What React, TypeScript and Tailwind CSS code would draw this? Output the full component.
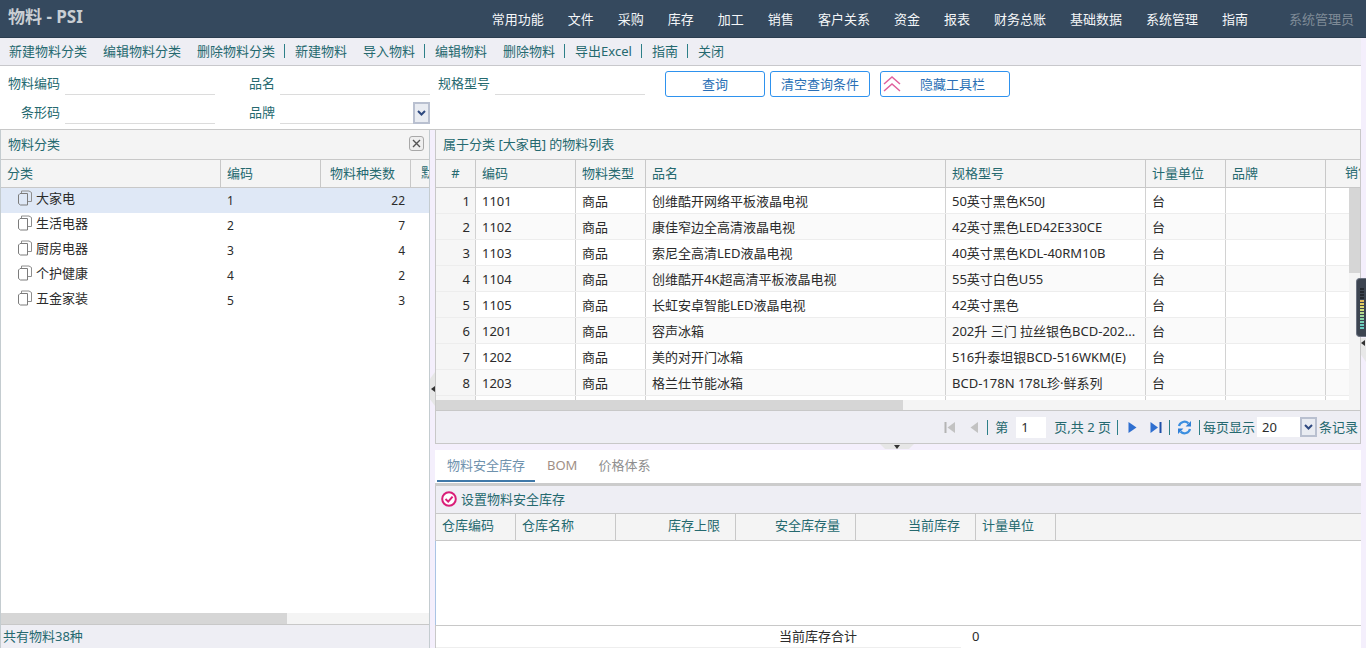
import React from "react"

const menus = ["常用功能", "文件", "采购", "库存", "加工", "销售", "客户关系", "资金", "报表", "财务总账", "基础数据", "系统管理", "指南"]

const tools = [
  "新建物料分类", "编辑物料分类", "删除物料分类", "|", "新建物料", "导入物料", "|",
  "编辑物料", "删除物料", "|", "导出Excel", "|", "指南", "|", "关闭",
]

const categories = [
  { name: "大家电", code: "1", count: "22" },
  { name: "生活电器", code: "2", count: "7" },
  { name: "厨房电器", code: "3", count: "4" },
  { name: "个护健康", code: "4", count: "2" },
  { name: "五金家装", code: "5", count: "3" },
]

const goods = [
  ["1", "1101", "商品", "创维酷开网络平板液晶电视", "50英寸黑色K50J", "台"],
  ["2", "1102", "商品", "康佳窄边全高清液晶电视", "42英寸黑色LED42E330CE", "台"],
  ["3", "1103", "商品", "索尼全高清LED液晶电视", "40英寸黑色KDL-40RM10B", "台"],
  ["4", "1104", "商品", "创维酷开4K超高清平板液晶电视", "55英寸白色U55", "台"],
  ["5", "1105", "商品", "长虹安卓智能LED液晶电视", "42英寸黑色", "台"],
  ["6", "1201", "商品", "容声冰箱", "202升 三门 拉丝银色BCD-202...", "台"],
  ["7", "1202", "商品", "美的对开门冰箱", "516升泰坦银BCD-516WKM(E)", "台"],
  ["8", "1203", "商品", "格兰仕节能冰箱", "BCD-178N 178L珍·鲜系列", "台"],
  ["", "", "", "", "", ""],
]

const handleBars = ["#23282f", "#23282f", "#23282f", "#23282f", "#e0b85a", "#e3cc62", "#dcd76e", "#cfdc7c", "#b5d98e", "#9fd69c", "#8ad3a8", "#78d0b4", "#6accc0", "#6accc0"]

function HeadCell({ className, children }: { className: string; children?: React.ReactNode }) {
  return (
    <div className={`flex h-full shrink-0 items-center overflow-hidden whitespace-nowrap border-r border-[#c8c8c8] ${className}`}>
      {children}
    </div>
  )
}

function Field({ label, children }: { label: string; children?: React.ReactNode }) {
  return (
    <div className="flex w-[215px] shrink-0 items-center">
      <span className="w-[60px] text-right">{label}</span>
      <div className="ml-[5px] flex h-[24px] w-[150px] justify-end border-b border-[#dcdcdc]">{children}</div>
    </div>
  )
}

function DropArrow({ className }: { className: string }) {
  return (
    <div className={`flex items-center justify-center border-2 border-[#b9c0d0] bg-[#e9ecf2] ${className}`}>
      <svg width="9" height="6" viewBox="0 0 9 6">
        <path d="M1 1 L4.5 4.5 L8 1" fill="none" stroke="#2f4a80" strokeWidth="2" />
      </svg>
    </div>
  )
}

function PageIcon() {
  return (
    <svg width="15" height="16" viewBox="0 0 15 16" className="shrink-0">
      <path d="M3.5 3.5 V1 H11 L13.5 2.5 V11.5 H9.5" fill="none" stroke="#8e8e8e" />
      <path d="M0.5 5 L2 3.5 H9.5 V15 H2.5 L0.5 13.5 Z" fill="none" stroke="#7c7c7c" />
    </svg>
  )
}

function Sep({ className }: { className: string }) {
  return <span className={`block h-[15px] w-px shrink-0 bg-[#2c7f88] ${className}`} />
}

function RefreshIcon() {
  return (
    <svg width="15" height="15" viewBox="0 0 15 15" className="ml-[7px] shrink-0">
      <path d="M2 6 A5.6 5.6 0 0 1 11.4 3.4" fill="none" stroke="#3b8ee0" strokeWidth="2.2" />
      <path d="M14 1 V6.4 H8.6 Z" fill="#2f7fd8" />
      <path d="M13 9 A5.6 5.6 0 0 1 3.6 11.6" fill="none" stroke="#3b8ee0" strokeWidth="2.2" />
      <path d="M1 14 V8.6 H6.4 Z" fill="#2f7fd8" />
    </svg>
  )
}

function Pager() {
  return (
    <div className="flex h-[34px] items-center justify-end border-y border-[#c8c8c8] bg-[#eeeef4] pr-[2px]">
      <svg width="12" height="13" viewBox="0 0 12 13" className="shrink-0">
        <rect x="0.5" y="1" width="2" height="11" fill="#b4b4b4" />
        <path d="M11 1 V12 L3.5 6.5 Z" fill="#c2c2c2" />
      </svg>
      <svg width="8" height="13" viewBox="0 0 8 13" className="ml-[14px] shrink-0">
        <path d="M8 1 V12 L0.5 6.5 Z" fill="#c2c2c2" />
      </svg>
      <Sep className="ml-[9px]" />
      <span className="ml-[7px]">第</span>
      <div className="ml-[8px] flex h-[21px] w-[30px] items-center bg-white pl-[5px] text-[#2b2b2b]">1</div>
      <span className="ml-[8px]">页,共 2 页</span>
      <Sep className="ml-[6px]" />
      <svg width="9" height="13" viewBox="0 0 9 13" className="ml-[10px] shrink-0">
        <path d="M0.5 1 V12 L8.5 6.5 Z" fill="#2f6fd0" />
      </svg>
      <svg width="12" height="13" viewBox="0 0 12 13" className="ml-[13px] shrink-0">
        <path d="M0.5 1 V12 L8 6.5 Z" fill="#2f6fd0" />
        <rect x="9.5" y="1" width="2" height="11" fill="#1f4fa8" />
      </svg>
      <Sep className="ml-[7px]" />
      <RefreshIcon />
      <Sep className="ml-[7px]" />
      <span className="ml-[3px]">每页显示</span>
      <div className="ml-[2px] flex h-[20px] w-[43px] items-center bg-white pl-[5px] text-[#2b2b2b]">20</div>
      <DropArrow className="h-[20px] w-[17px]" />
      <span className="ml-[2px]">条记录</span>
    </div>
  )
}

export default function App() {
  return (
    <div className="relative flex h-[648px] w-[1366px] flex-col overflow-hidden bg-[#f4effc] font-['Noto_Sans','Noto_Sans_CJK_SC',sans-serif] text-[13px] leading-[18px] text-[#25696f]">
      {/* top bar */}
      <div className="flex h-[38px] shrink-0 items-center border-b border-[#2b3d4f] bg-[#35495e] pl-[8px] pr-[12px]">
        <span className="pb-[4px] text-[17px] font-bold text-[#c9ced3]">物料 - PSI</span>
        <div className="ml-auto flex gap-[24px] text-[#f4f6f8]">
          {menus.map((m, i) => (
            <span key={i}>{m}</span>
          ))}
        </div>
        <span className="ml-[41px] text-[#7f8b97]">系统管理员</span>
      </div>

      <div className="flex min-h-0 w-[1361px] flex-1 flex-col">
        {/* toolbar */}
        <div className="flex h-[28px] shrink-0 items-center border-b border-[#c8c8cc] bg-[#eeeef4] pb-[2px] pl-[1px]">
          {tools.map((t, i) =>
            t === "|" ? (
              <span key={i} className="ml-px mr-[2px] h-[14px] w-px bg-[#2c7f88]" />
            ) : (
              <span key={i} className="mx-[8px]">{t}</span>
            ),
          )}
        </div>

        {/* query form */}
        <div className="flex h-[63px] shrink-0 flex-col bg-white">
          <div className="mt-[5px] flex h-[26px] items-start">
            <Field label="物料编码" />
            <Field label="品名" />
            <Field label="规格型号" />
            <button className="ml-[20px] h-[26px] w-[100px] rounded-[3px] border border-[#2e92ee] text-[#2a6fb5]">查询</button>
            <button className="ml-[5px] h-[26px] w-[100px] rounded-[3px] border border-[#2e92ee] text-[#2a6fb5]">清空查询条件</button>
            <button className="relative ml-[10px] h-[26px] w-[130px] rounded-[3px] border border-[#2e92ee] pl-[15px] text-[#2a6fb5]">
              隐藏工具栏
              <svg width="18" height="16" viewBox="0 0 18 16" className="absolute left-[2px] top-[4px]">
                <path d="M1 8 L9 1 L17 8 M1 15 L9 8 L17 15" fill="none" stroke="#e0609c" strokeWidth="1.5" />
              </svg>
            </button>
          </div>
          <div className="mt-[3px] flex h-[24px] items-center">
            <Field label="条形码" />
            <Field label="品牌">
              <DropArrow className="-mb-px h-[22px] w-[17px] self-end" />
            </Field>
          </div>
        </div>

        {/* main area */}
        <div className="flex min-h-0 flex-1 border-t border-[#c8c8c8]">
          {/* category panel */}
          <div className="flex w-[430px] shrink-0 flex-col overflow-hidden border-x border-[#c4ccd0] bg-white">
            <div className="flex h-[30px] shrink-0 items-center justify-between border-b border-[#c8c8c8] bg-[#f4f4f4] pb-[2px] pl-[7px] pr-[5px]">
              <span>物料分类</span>
              <span className="flex h-[15px] w-[15px] items-center justify-center rounded-[3px] border border-[#a8a8a8] bg-[#efefef]">
                <svg width="9" height="9" viewBox="0 0 9 9">
                  <path d="M1 1 L8 8 M8 1 L1 8" stroke="#555" strokeWidth="1.4" />
                </svg>
              </span>
            </div>
            <div className="flex h-[28px] shrink-0 border-b border-[#c8c8c8] bg-[#f4f4f4]">
              <HeadCell className="w-[220px] pb-[2px] pl-[6px]">分类</HeadCell>
              <HeadCell className="w-[100px] pb-[2px] pl-[6px]">编码</HeadCell>
              <HeadCell className="w-[90px] pb-[2px] pl-[9px]">物料种类数</HeadCell>
              <div className="overflow-hidden whitespace-nowrap pl-[10px] leading-[25px]">默认</div>
            </div>
            <div className="min-h-0 flex-1 text-[#2b2b2b]">
              {categories.map((c, i) => (
                <div key={c.code} className={`flex h-[25px] items-center ${i === 0 ? "bg-[#dfe8f6]" : ""}`}>
                  <div className="flex w-[220px] shrink-0 -translate-y-[3px] items-center pl-[17px]">
                    <PageIcon />
                    <span className="ml-[3px]">{c.name}</span>
                  </div>
                  <span className="w-[100px] shrink-0 pl-[6px] text-[12px]">{c.code}</span>
                  <span className="w-[84px] shrink-0 text-right text-[12px]">{c.count}</span>
                </div>
              ))}
            </div>
            <div className="flex h-[11px] shrink-0 bg-[#f4f4f4]">
              <div className="h-full w-[286px] bg-[#d6d6d6]" />
            </div>
            <div className="flex h-[24px] shrink-0 items-center border-t border-[#c8c8c8] bg-[#eeeef4] pb-[2px] pl-[2px]">共有物料38种</div>
          </div>

          {/* splitter */}
          <div className="relative w-[5px] shrink-0">
            <div className="absolute left-0 top-[242px] flex h-[34px] w-[5px] items-center justify-center bg-[#e6e6e6] [clip-path:polygon(100%_0,100%_100%,0_80%,0_20%)]">
              <svg width="4" height="6" viewBox="0 0 4 6">
                <path d="M4 0 V6 L0 3 Z" fill="#333" />
              </svg>
            </div>
          </div>

          {/* right column */}
          <div className="flex min-w-0 flex-1 flex-col">
            <div className="flex h-[314px] shrink-0 flex-col border-x border-[#c8c8c8] bg-white">
              <div className="flex h-[30px] shrink-0 items-center border-b border-[#c8c8c8] bg-[#f4f4f4] pb-[2px] pl-[7px]">属于分类 [大家电] 的物料列表</div>
              <div className="flex h-[28px] shrink-0 border-b border-[#c8c8c8] bg-[#f4f4f4]">
                <HeadCell className="w-[40px] justify-center pb-[2px]">#</HeadCell>
                <HeadCell className="w-[100px] pb-[2px] pl-[6px]">编码</HeadCell>
                <HeadCell className="w-[70px] pb-[2px] pl-[6px]">物料类型</HeadCell>
                <HeadCell className="w-[300px] pb-[2px] pl-[6px]">品名</HeadCell>
                <HeadCell className="w-[200px] pb-[2px] pl-[6px]">规格型号</HeadCell>
                <HeadCell className="w-[80px] pb-[2px] pl-[6px]">计量单位</HeadCell>
                <HeadCell className="w-[100px] pb-[2px] pl-[6px]">品牌</HeadCell>
                <div className="overflow-hidden whitespace-nowrap pl-[19px] leading-[25px]">销售基价</div>
              </div>
              <div className="flex min-h-0 flex-1">
                <div className="min-w-0 flex-1 overflow-hidden text-[#2b2b2b]">
                  {goods.map((r, i) => (
                    <div key={i} className={`flex h-[26px] border-b border-[#ededed] ${i % 2 === 1 ? "bg-[#fafafa]" : "bg-white"}`}>
                      <div className="flex w-[40px] shrink-0 items-center justify-end border-r border-[#d2d2d2] bg-[#f6f6f6] pr-[5px]">{r[0]}</div>
                      <div className="flex w-[100px] shrink-0 items-center border-r border-[#d2d2d2] pl-[6px]">{r[1]}</div>
                      <div className="flex w-[70px] shrink-0 items-center border-r border-[#d2d2d2] pl-[6px]">{r[2]}</div>
                      <div className="flex w-[300px] shrink-0 items-center border-r border-[#d2d2d2] pl-[6px]">{r[3]}</div>
                      <div className="flex w-[200px] shrink-0 items-center whitespace-nowrap border-r border-[#d2d2d2] pl-[6px]">{r[4]}</div>
                      <div className="flex w-[80px] shrink-0 items-center border-r border-[#d2d2d2] pl-[6px]">{r[5]}</div>
                      <div className="w-[100px] shrink-0 border-r border-[#d2d2d2]" />
                    </div>
                  ))}
                </div>
                <div className="flex w-[11px] shrink-0 flex-col bg-[#f4f4f4]">
                  <div className="h-[85px] bg-[#d6d6d6]" />
                </div>
              </div>
              <div className="flex h-[10px] shrink-0 bg-[#f4f4f4]">
                <div className="h-full w-[467px] bg-[#d6d6d6]" />
              </div>
              <Pager />
            </div>

            {/* horizontal splitter */}
            <div className="relative h-[6px] shrink-0">
              <div className="absolute left-[445px] top-0 flex h-[5px] w-[34px] items-center justify-center bg-[#e6e6e6] [clip-path:polygon(0_0,100%_0,85%_100%,15%_100%)]">
                <svg width="6" height="4" viewBox="0 0 6 4">
                  <path d="M0 0 H6 L3 4 Z" fill="#333" />
                </svg>
              </div>
            </div>

            {/* lower tabs */}
            <div className="flex min-h-0 flex-1 flex-col bg-white">
              <div className="flex h-[36px] shrink-0 items-stretch border-b-[3px] border-[#cccccc] pl-[2px]">
                <div className="mb-px flex w-[98px] items-center justify-center border-b-[2px] border-[#3f78a8] text-[#6f92ad]">物料安全库存</div>
                <div className="ml-[12px] flex items-center pb-[3px] text-[#a08f86]">BOM</div>
                <div className="ml-[21px] flex items-center pb-[3px] text-[#8f8f8f]">价格体系</div>
              </div>
              <div className="flex h-[27px] shrink-0 items-center border-l border-[#c8c8c8] bg-[#eeeef4] pb-[2px] pl-[5px]">
                <svg width="16" height="16" viewBox="0 0 16 16" className="shrink-0">
                  <circle cx="8" cy="8" r="6.8" fill="#fff" stroke="#d91e78" strokeWidth="2" />
                  <path d="M4.5 8 L7.2 10.6 L11.6 5.6" fill="none" stroke="#d91e78" strokeWidth="2" />
                </svg>
                <span className="ml-[4px]">设置物料安全库存</span>
              </div>
              <div className="flex h-[28px] shrink-0 border-y border-l border-[#c8c8c8] bg-[#f4f4f4]">
                <HeadCell className="w-[80px] pb-[4px] pl-[6px]">仓库编码</HeadCell>
                <HeadCell className="w-[100px] pb-[4px] pl-[6px]">仓库名称</HeadCell>
                <HeadCell className="w-[120px] justify-end pb-[4px] pr-[15px]">库存上限</HeadCell>
                <HeadCell className="w-[120px] justify-end pb-[4px] pr-[15px]">安全库存量</HeadCell>
                <HeadCell className="w-[120px] justify-end pb-[4px] pr-[15px]">当前库存</HeadCell>
                <HeadCell className="w-[80px] pb-[4px] pl-[6px]">计量单位</HeadCell>
              </div>
              <div className="min-h-0 flex-1 border-l border-[#a9c4e4]" />
              <div className="h-[23px] shrink-0 border-l border-t border-[#c8c8c8] text-[#2b2b2b]">
                <div className="flex h-full w-[525px] items-center whitespace-nowrap border-b border-[#eeeeee] pb-[2px]">
                  <span className="ml-[343px] shrink-0">当前库存合计</span>
                  <span className="ml-[115px] shrink-0">0</span>
                </div>
              </div>
            </div>
          </div>
        </div>
      </div>

      {/* page handle on the right edge */}
      <div className="absolute left-[1356px] top-[278px] flex h-[59px] w-[10px] flex-col items-center gap-px rounded-l-[4px] border border-r-0 border-[#6b7280] bg-[#3c4450] pt-[9px]">
        {handleBars.map((c, i) => (
          <span key={i} className="h-[2px] w-[4px]" style={{ backgroundColor: c }} />
        ))}
      </div>
      <div className="absolute left-[1361px] top-[338px] flex h-[24px] w-[5px] items-start bg-[#e8e8e8] pt-[2px] [clip-path:polygon(0_0,100%_0,100%_100%,0_70%)]">
        <svg width="4" height="6" viewBox="0 0 4 6">
          <path d="M4 0 V6 L0 3 Z" fill="#333" />
        </svg>
      </div>
    </div>
  )
}
